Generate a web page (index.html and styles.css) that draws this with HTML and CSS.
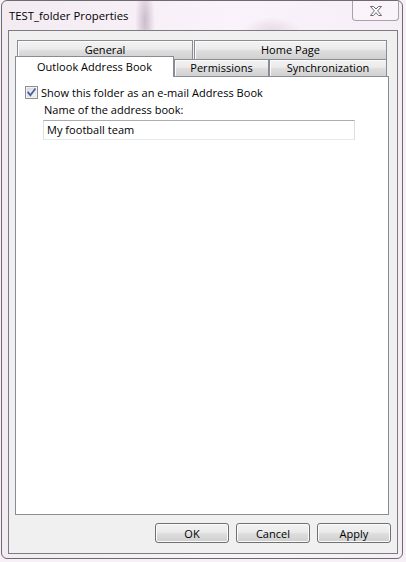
FILE: index.html
```html
<!DOCTYPE html>
<html lang="en">
<head>
    <meta charset="UTF-8">
    <title>TEST_folder Properties</title>
    <link rel="stylesheet" href="styles.css">
</head>
<body>
    <div class="window">
        <div class="titlebar">
            <span class="title">TEST_folder Properties</span>
            <div class="close">
                <svg width="12" height="10" viewBox="0 0 12 10">
                    <polygon points="0.5,0.5 3.5,0.5 6,3 8.5,0.5 11.5,0.5 7.7,4.8 11.5,9.5 8.5,9.5 6,6.6 3.5,9.5 0.5,9.5 4.3,4.8" fill="#fff" stroke="#6b6b6b" stroke-width="1" stroke-linejoin="round"/>
                </svg>
            </div>
        </div>
        <div class="client">
            <div class="tabs">
                <div class="tabrow">
                    <div class="tab tab-general">General</div>
                    <div class="tab tab-home">Home Page</div>
                </div>
                <div class="tabrow">
                    <div class="tab tab-active">Outlook Address Book</div>
                    <div class="tab tab-perm">Permissions</div>
                    <div class="tab tab-sync">Synchronization</div>
                </div>
            </div>
            <div class="panel">
                <label class="check">
                    <span class="box">
                        <svg width="13" height="13" viewBox="0 0 13 13">
                            <defs>
                                <linearGradient id="inner" x1="0" y1="0" x2="1" y2="1">
                                    <stop offset="0" stop-color="#d8dbe0"/>
                                    <stop offset="1" stop-color="#f8f8f8"/>
                                </linearGradient>
                            </defs>
                            <rect x="0.5" y="0.5" width="12" height="12" fill="#fff" stroke="#8e8f8f"/>
                            <rect x="2" y="2" width="9" height="9" fill="url(#inner)" stroke="#cfd3d8" stroke-width="0.6"/>
                            <path d="M3.2 6.6 L5.4 9.2 L9.9 3.2" fill="none" stroke="#4a63a0" stroke-width="1.8" stroke-linecap="square"/>
                        </svg>
                    </span>
                    Show this folder as an e-mail Address Book
                </label>
                <div class="field">
                    <div class="field-label">Name of the address book:</div>
                    <div class="textbox">My football team</div>
                </div>
            </div>
            <div class="buttons">
                <button class="btn">OK</button>
                <button class="btn">Cancel</button>
                <button class="btn">Apply</button>
            </div>
        </div>
    </div>
</body>
</html>
```

FILE: styles.css
```css
body{
    margin: 0;
    width: 406px;
    height: 562px;
    overflow: hidden;
    background: #f7f0f6;
    font-family: "Open Sans", sans-serif;
    font-size: 11px;
    letter-spacing: 0.03px;
    color: #000;
}
.window{
    box-sizing: border-box;
    width: 402px;
    height: 559px;
    margin-left: 1px;
    padding: 0 4px 4px 6px;
    border: 1px solid #6e6b6e;
    border-radius: 6px;
    background:
        radial-gradient(ellipse 10px 40px at 143px 20px, rgba(150, 125, 150, 0.45), transparent),
        radial-gradient(ellipse 30px 14px at 270px 30px, rgba(190, 170, 190, 0.35), transparent),
        linear-gradient(90deg, #f3ebf2, #fbf3fb 60%, #f6eef6);
    display: flex;
    flex-direction: column;
}
.titlebar{
    height: 29px;
    display: flex;
    align-items: flex-start;
    justify-content: space-between;
}
.title{
    margin: 7px 0 0 1px;
    font-size: 11.3px;
}
.close{
    box-sizing: border-box;
    width: 47px;
    height: 20px;
    margin-right: -1px;
    border: 1px solid #a9a3a9;
    border-top: none;
    border-radius: 0 0 4px 4px;
    background: rgba(255, 255, 255, 0.35);
    display: flex;
    align-items: center;
    justify-content: center;
}
.client{
    box-sizing: border-box;
    flex: 1;
    border: 1px solid #7d7b7d;
    background: #f0f0f0;
    padding: 9px 6px 0 6px;
    display: flex;
    flex-direction: column;
}
.tabs{
    margin-left: 2px;
    width: 370px;
}
.tabrow{
    display: flex;
}
.tab{
    box-sizing: border-box;
    border: 1px solid #898c95;
    border-bottom: none;
    background: linear-gradient(#f3f3f3, #ebebeb 45%, #dddddd 55%, #d1d1d1);
    box-shadow: inset 1px 1px 0 #fcfcfc;
    text-align: center;
}
.tabrow:first-child .tab{
    height: 19px;
    line-height: 18px;
}
.tab-general{
    width: 176px;
    margin-right: 1px;
}
.tab-home{
    width: 193px;
}
.tabrow:last-child .tab{
    height: 17px;
    line-height: 16px;
}
.tab-perm{
    width: 95px;
}
.tab-sync{
    width: 118px;
}
.tabrow:last-child .tab-active{
    position: relative;
    z-index: 1;
    width: 159px;
    height: 21px;
    margin: -3px 0 -1px -2px;
    background: #fff;
    box-shadow: none;
    line-height: 19px;
}
.panel{
    box-sizing: border-box;
    width: 374px;
    height: 439px;
    border: 1px solid #898c95;
    background: #fff;
    padding: 9px 9px;
}
.check{
    display: flex;
    align-items: center;
    height: 13px;
    gap: 3px;
}
.box{
    display: block;
    width: 13px;
    height: 13px;
}
.box svg{
    display: block;
}
.field{
    margin: 3px 0 0 18px;
}
.field-label{
    line-height: 16px;
    margin-left: 1px;
    margin-bottom: 2px;
}
.textbox{
    box-sizing: border-box;
    width: 312px;
    height: 20px;
    border: 1px solid #dbdfe6;
    border-top-color: #abadb3;
    border-bottom-color: #e3e9ef;
    padding-left: 3px;
    line-height: 18px;
}
.buttons{
    display: flex;
    justify-content: flex-end;
    gap: 7px;
    margin-top: 8px;
}
.btn{
    box-sizing: border-box;
    width: 74px;
    height: 20px;
    padding: 0;
    border: 1px solid #707070;
    border-radius: 3px;
    background: linear-gradient(#f2f2f2, #ebebeb 45%, #dddddd 55%, #cfcfcf);
    box-shadow: inset 0 0 0 1px #fbfbfb;
    font-family: inherit;
    font-size: 11px;
    letter-spacing: inherit;
    color: #000;
}
```
